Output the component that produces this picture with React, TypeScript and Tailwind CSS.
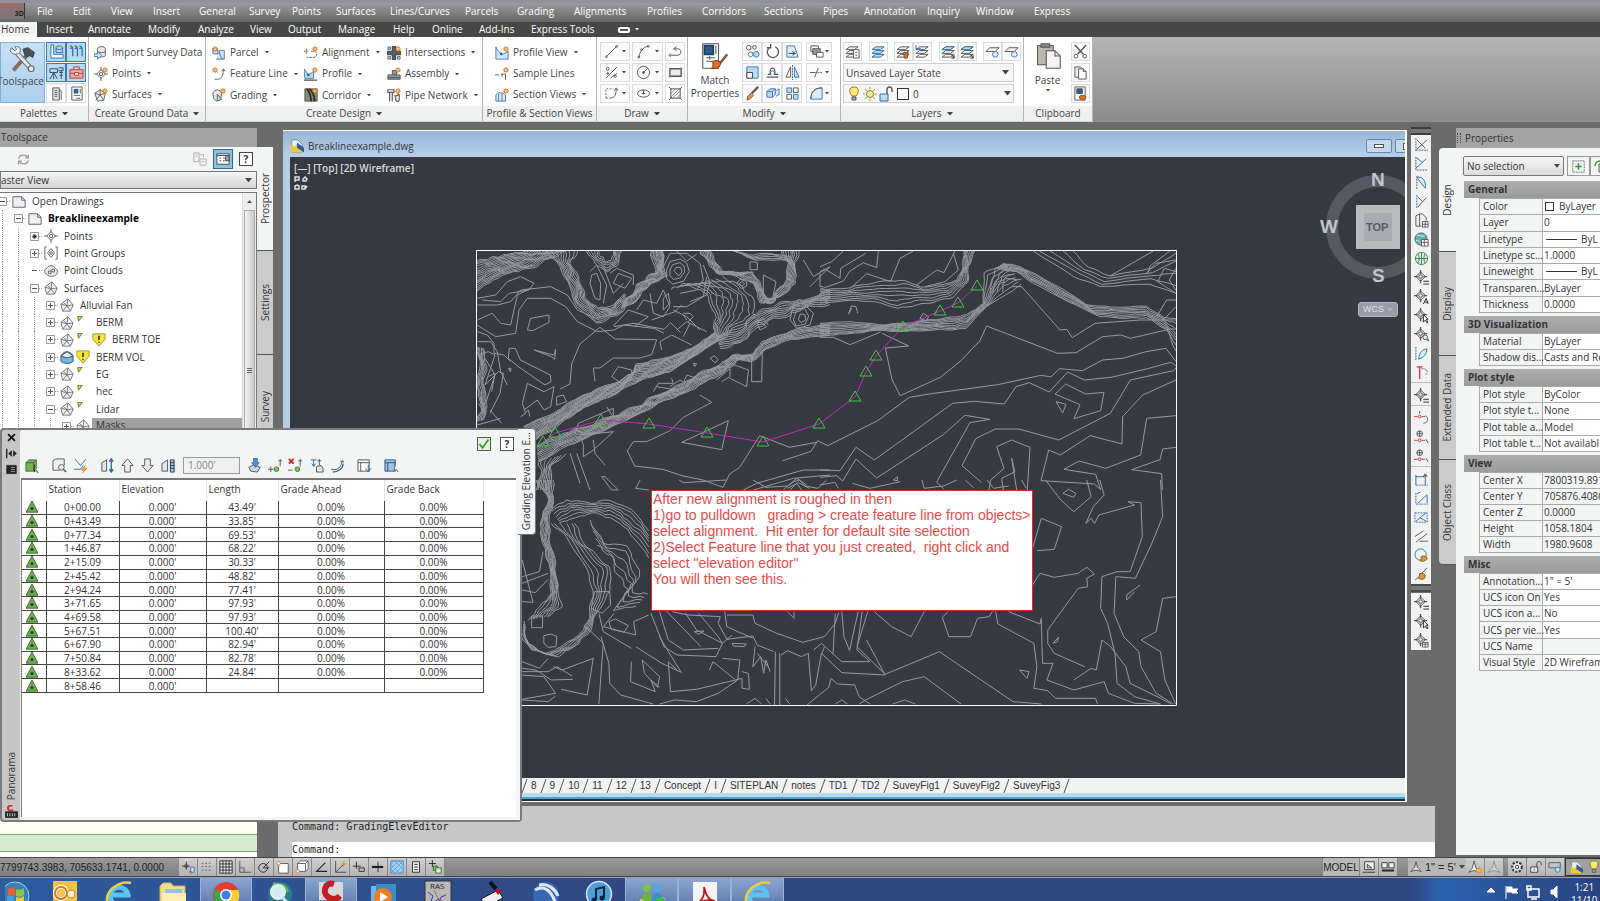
import React from 'react';

type Pt = [number, number];

/* ---------- icons, all on a 16x16 grid ---------- */

const star = (
  <g stroke="#e07b1f">
    <path d="M12.5 0v7M9 3.5h7M10 1l5 5M15 1l-5 5" strokeWidth="1.1" />
    <circle cx="12.5" cy="3.5" r="1.5" fill="#fff" strokeWidth="1" />
  </g>
);

const diamond = (
  <g>
    <path d="M8 3l5 5-5 5-5-5z" />
    <circle cx="8" cy="8" r="2" />
    <path d="M8 0v4M8 12v4M0 8h4M12 8h4" />
  </g>
);

const layers = (
  <g>
    <path d="M5 3h9l-4 3H1zM5 7h9l-4 3H1zM5 11h9l-4 3H1z" fill="#f4f4f4" />
  </g>
);

const smallDiamond = (
  <g>
    <path d="M7 2l5 5-5 5-5-5z" fill="#e4e7ea" />
    <circle cx="7" cy="7" r="2" />
    <path d="M7 0v4M7 10v4M0 7h4M10 7h4" strokeWidth="1.400" />
  </g>
);

const icons: Record<string, React.ReactNode> = {
  tools: (
    <g>
      <path d="M2 15L11 5" stroke="#8b6f5c" strokeWidth="2.4" />
      <path d="M8 2l3-1 4 3-1 3-2-1-2 1-1-2z" fill="#4c4f53" stroke="#3b3e42" strokeWidth=".6" />
      <path d="M3 3l10 11" stroke="#6d7175" strokeWidth="3" />
      <path d="M3 3l10 11" stroke="#e9edf0" strokeWidth="1.8" />
      <path d="M1 1l2 2 1-1-1-2c3 0 4 2 3 4-2 2-5 1-6-1z" fill="#e9edf0" stroke="#6d7175" strokeWidth=".6" />
      <circle cx="13" cy="14" r="1.8" fill="#e9edf0" stroke="#6d7175" strokeWidth=".8" />
    </g>
  ),
  prospector: <g stroke="#2d6ca8"><path d="M2 1v14h13v-4H5V1z" fill="#fff" /><ellipse cx="11" cy="4" rx="3.5" ry="2" fill="#b8dcf5" /><path d="M7.500 4v5h7V4" /></g>,
  pipes: <g stroke="#2d6ca8"><path d="M1 2c3 0 3 2 3 4v7M1 5c1-1 3-1 3 1M6 2c3 0 3 2 3 4v7M6 5c1-1 3-1 3 1M11 2c3 0 3 2 3 4v7M11 5c1-1 3-1 3 1" strokeWidth="1.300" /></g>,
  survey: <g stroke="#36485c"><path d="M1 4h8v4H1zM10 3h5v3h-5M5 8l-4 7M5 8v7M5 8l4 7M11 8h4M11 11h4M13 6v9" /></g>,
  toolbox: <g stroke="#b23a3a"><path d="M1 5h14v9H1z" fill="#f0a9a2" /><path d="M5 5V2h6v3M1 9h14" /><path d="M6 8h4v3H6z" fill="#fff" /></g>,
  server: <g><path d="M4 2h7v13H4z" fill="#e4e4e4" /><path d="M6 5h3M6 7h3M6 9h3M6 11h3M11 4l2 1v10" /></g>,
  propsPanel: <g><path d="M3 1h11v14H3z" fill="#fff" /><path d="M5 3h5v5H5z" fill="#3a5e8f" stroke="none" /><path d="M12 3v5M5 10h7M8 13h4" /></g>,
  importSurvey: <g><path d="M4 3c0-3 9-3 9 0v8c0 2-9 2-9 0z" fill="#e8eaec" /><path d="M4 6c0 2 9 2 9 0" /><path d="M0 9h4V6l5 5-5 4v-3H0z" fill="#cfe3f3" stroke="#3b6fa5" /></g>,
  points: <g>{diamond}{star}</g>,
  surfaces: <g><path d="M1 6l6-4 6 4-2 8-7 1z" fill="#eceef0" /><path d="M7 2v6l4 6M7 8l-5 6M7 8l6-2M1 6l6 2" />{star}</g>,
  parcel: <g><path d="M1 3h5l1 6h-6zM8 5h6v10H5" fill="#cfe4f7" stroke="#3b6fa5" /><path d="M8 5c0 4 2 7 4 10" /><g transform="translate(-9 0)">{star}</g></g>,
  featureLine: <g><path d="M3 14h3c4 0 7-3 7-11M11 5l2-3 2 3" /><g transform="translate(-9 0)">{star}</g></g>,
  grading: <g><path d="M1 6c2-5 9-5 10 0l-1 6-5 3-3-3z" fill="#e6e8ea" /><path d="M6 7l5 6-5 2z" fill="#b9d7ef" />{star}</g>,
  alignment: <g><path d="M0 6h5M8 6h4c3 0 3 7 0 7H3M3 3v6" strokeDasharray="3 1" />{star}</g>,
  profile: <g><path d="M0 15h15" strokeWidth="1.5" /><path d="M0 2l5 7 6-4v8H1z" fill="#b9d9f3" stroke="#3b78b5" /><circle cx="5" cy="9" r="1" fill="#333" />{star}</g>,
  corridor: <g><path d="M1 1h14v14H1z" fill="#8c8a78" stroke="#4b4a40" /><path d="M3 1c4 4 5 8 5 14M6 1c5 4 6 8 6 14" stroke="#2c2c26" strokeWidth="2" />{star}</g>,
  intersections: <g><path d="M6 0h4v6h6v4h-6v6H6v-6H0V6h6z" fill="#595f66" stroke="#34383c" /><path d="M1 1h3v3H1zM12 12h3v3h-3zM1 12h3v3H1z" fill="#a9c7e4" stroke="#4a6e93" />{star}</g>,
  assembly: <g><path d="M1 9h5V4h5v5h4v5H1z" fill="#8e969e" stroke="#4a5158" /><path d="M1 12h14M6 9h5" />{star}</g>,
  pipe: <g><path d="M1 2h7v3H1zM3 5v10M6 5v10M8 9c5 0 5 0 5-3M10 9v4c0 3 4 3 4 0V7" strokeWidth="1.3" />{star}</g>,
  profileView: <g stroke="#3b78b5"><path d="M1 1v14h14V6L8 10 3 5z" fill="#cfe4f7" /><circle cx="7" cy="9" r="1.200" fill="#23374a" />{star}</g>,
  sampleLines: <g><path d="M0 9h5M7 9c4 0 5-3 5 0v6M8 7v4" />{star}</g>,
  sectionViews: <g stroke="#3b78b5"><path d="M1 15V8c3-5 5-1 7-3l4 3v7z" fill="#dcebf8" /><path d="M4 7v8M8 6v9M12 8v7" />{star}</g>,
  line: <g><path d="M3 13L13 3" /><circle cx="2.500" cy="13.500" r="1" /><circle cx="13.500" cy="2.500" r="1" /></g>,
  arc: <g><path d="M3 14C4 8 7 4 13 2" /><circle cx="3" cy="14" r="1" /><circle cx="6" cy="6" r="1" /><circle cx="13" cy="2.500" r="1" /></g>,
  polyline: <g><path d="M2 12h8c5 0 5-7 0-7H7M9 3L6 5l3 2M3 10l-2 2 2 2" /></g>,
  divide: <g><path d="M2 14L14 2M7 14l7-5" /><circle cx="4" cy="4" r="1.500" /><circle cx="4" cy="9" r=".8" fill="#555" /><circle cx="12" cy="12" r="1.200" /></g>,
  circle: <g><circle cx="8" cy="8" r="6.500" /><circle cx="8" cy="8" r="1" fill="#555" /><path d="M8 8l4-4" /></g>,
  rect: <g><path d="M2 4h12v8H2z" fill="#ececec" strokeWidth="1.400" /><circle cx="14" cy="4" r="1" fill="#fff" /><circle cx="2" cy="12" r="1" fill="#fff" /></g>,
  curve: <g><path d="M7 13c5-1 6-4 6-10M11 5l2-3 2 3" /><path d="M2 13V3h8M2 13h5" strokeDasharray="2 1.500" stroke="#3b78b5" /></g>,
  ellipse: <g><ellipse cx="8" cy="8" rx="6.500" ry="3.800" /><path d="M8 4v5M6 8h4" /></g>,
  hatch: <g><path d="M3 3h10v10H3zM1 1l3 3M15 1l-3 3M1 15l3-3M15 15l-3-3" /><path d="M3 8l5-5M3 12l9-9M5 13l8-8M9 13l4-4" strokeWidth=".7" /></g>,
  copyObj: <g><circle cx="4" cy="4" r="2.500" /><circle cx="10" cy="3.500" r="2" /><circle cx="6" cy="11" r="2.500" stroke="#3b78b5" /><circle cx="12" cy="11" r="3" fill="#b9d9f3" stroke="#3b78b5" /></g>,
  rotate: <g><path d="M11 3a6 6 0 1 1-5 0M6 0v4H2" strokeWidth="1.400" /></g>,
  stretch: <g stroke="#3b78b5"><path d="M2 2h8l4 12H2z" fill="#dcedfa" /><path d="M4 10h6M8 8l3 2-3 2" stroke="#333" /></g>,
  scale: <g stroke="#3b78b5"><path d="M2 2h12v12H2z" fill="#b9dcf5" /><path d="M2 8h6v6H2z" fill="#fff" stroke="#444" /></g>,
  offset: <g><path d="M2 13h12M3 10h3c-3-9 7-9 4 0h4" strokeWidth="1.300" /><path d="M6 10c-1-5 5-5 4 0" stroke="#3b78b5" /></g>,
  mirror: <g><path d="M6 2v11H1z" /><path d="M10 2v11h5z" fill="#b9d9f3" stroke="#3b78b5" /><path d="M8 0v16" strokeDasharray="2 1" /></g>,
  erase: <g><path d="M14 1L7 8" stroke="#6b5444" strokeWidth="2.500" /><path d="M7 7l2 3-4 4-3 1 1-4z" fill="#d79a5b" stroke="#8a5526" /></g>,
  explode: <g stroke="#3b78b5"><path d="M2 6h6v6H2zM2 6l3-3h6L8 6M11 3v6l-3 3" fill="#b9d9f3" /><path d="M12 5l3-2v6l-3 2" fill="#dcedfa" /></g>,
  array: <g stroke="#3b78b5"><path d="M2 2h5v5H2zM9 9h5v5H9z" fill="#b9dcf5" /><path d="M9 2h5v5H9zM2 9h5v5H2z" stroke="#555" /></g>,
  front: <g><path d="M2 2h8v6H2z" /><path d="M4 5h8v6H4z" fill="#999" /><path d="M8 9h7v5H8z" fill="#fff" /></g>,
  trim: <g><path d="M1 8h6M10 3L6 13" /><path d="M9 8h6" strokeDasharray="2 1" stroke="#3b78b5" /></g>,
  fillet: <g><path d="M2 14C2 6 6 2 14 2v12z" fill="#dcedfa" stroke="#3b78b5" /><path d="M2 14C2 6 6 2 14 2" /></g>,
  layerProps: <g>{layers}<path d="M9 6h6v9H9z" fill="#fff" /><path d="M11 9h2M11 12h2" /></g>,
  layerBlue: <g stroke="#2f6cab"><path d="M5 3h9l-4 3H1zM5 7h9l-4 3H1zM5 11h9l-4 3H1z" fill="#bfdcf4" /></g>,
  layerBrush: <g>{layers}<path d="M8 9h5l-1 6H9z" fill="#c97a33" stroke="#85481a" /></g>,
  layerPrev: <g>{layers}<path d="M1 1v4h5" stroke="#2f6cab" /></g>,
  layerArrow: <g>{layers}<path d="M5 3h9l-4 3H1z" fill="#bfdcf4" stroke="#2f6cab" /><path d="M11 11l3 4M14 12v3h-3" stroke="#1d2c3c" /></g>,
  layerOne: <g><path d="M5 4h10l-4 4H1z" fill="#f4f4f4" /><circle cx="11" cy="11" r="3" stroke="#3b78b5" fill="#dcedfa" /></g>,
  bulb: <g><path d="M8 1c6 0 5 6 2 9H6C3 7 2 1 8 1z" fill="#fbe77a" stroke="#8d7a22" /><path d="M6 11h4v3H6z" fill="#aaa" /></g>,
  sun: <g><circle cx="8" cy="8" r="3.500" fill="#fbe9a0" stroke="#8d7a22" /><path d="M8 1v2M8 13v2M1 8h2M13 8h2M3 3l2 2M11 11l2 2M13 3l-2 2M3 13l2-2" stroke="#c78d1c" /></g>,
  unlock: <g stroke="#2f6cab"><path d="M2 8h8v7H2z" fill="#bcdcf5" /><path d="M9 8V4c0-4 5-4 5 0v2" stroke="#555" strokeWidth="1.400" /></g>,
  match: <g><path d="M1 1h9v14H1z" fill="#fff" strokeWidth=".6" /><path d="M2 2h5v5H2z" fill="#2f5a93" stroke="#1e3d66" /><path d="M8.500 2v5M3 9h5M3 11h4M5 8v2" strokeWidth=".6" /><path d="M15 7l-4 5" stroke="#7a6250" strokeWidth="1.600" /><path d="M7 11c2-1 5 0 4 2-1 3-4 2-5 2 2-1 0-2 1-4z" fill="#d8732b" stroke="#8f4413" strokeWidth=".6" /></g>,
  paste: <g strokeWidth=".6"><path d="M2 2h9v11H2z" fill="#bdb5ac" /><path d="M4 1h5v2H4z" fill="#888" /><path d="M7 5h5l3 3v7H7z" fill="#f2f3f5" /><path d="M12 5v3h3" /></g>,
  cut: <g><path d="M2 1l9 10M14 1L5 11" strokeWidth="1.500" /><circle cx="3" cy="13" r="2" /><circle cx="12.500" cy="13" r="2" /></g>,
  copy: <g><path d="M2 2h6l2 2v9H2z" fill="#eee" /><path d="M6 4h5l3 3v8H6z" fill="#fff" /><path d="M11 4v3h3" /></g>,
  pasteSpec: <g><path d="M2 1h11v14H2z" fill="#fff" /><path d="M4 3h6v5H4z" fill="#2f5a93" /><path d="M7 11c2-2 6-1 7 1-2 4-6 3-7 1z" fill="#d8732b" stroke="#8f4413" /></g>,
  refresh: <g stroke="#9a9a9a" strokeWidth="1.500"><path d="M2 7c1-5 8-6 11-2M14 2v4h-4M14 9c-1 5-8 6-11 2M2 14v-4h4" /></g>,
  docs: <g stroke="#aaa"><path d="M1 1h6v10H1zM3 3h2M3 5h2M8 8h7v7H8zM8 3h4v3M10 11h3" /></g>,
  preview: <g stroke="#2b3d4d"><path d="M1 2h14v12H1z" fill="#fff" /><path d="M1 4h14M4 7h2M4 10h2M8 7h2M8 10h2" /><path d="M11 4h4v6h-4z" fill="#9aa" /></g>,
  doc: <g stroke="#50566a"><path d="M1 2h10l4 4v8H1z" fill="#f1f1f3" /><path d="M11 2v4h4" /></g>,
  pointTree: diamond,
  pointGroups: <g><path d="M3 1H1v14h2M13 1h2v14h-2" /><path d="M8 3l4 5-4 5-4-5z" /><circle cx="8" cy="8" r="1.500" /></g>,
  cloud: <g><path d="M3 12C0 10 0 6 3 5c2-4 8-4 10 0 3 1 3 6 0 8-3 2-8 1-10-1z" fill="#f0f0f0" /><path d="M5 8h3v3H5zM9 6h3v3H9z" /></g>,
  surfTree: <g stroke="#6a6e78"><path d="M9 1l6 7-3 7H3L1 7z" fill="#f2f2f4" /><path d="M9 1L8 9l4 6M8 9l-5 6M8 9l7-1M8 9L1 7M4 5l4 4" /></g>,
  volume: <g stroke="#39464f"><path d="M1 7c0 0 2-5 7-5s7 5 7 5v6c-3 3-11 3-14 0z" fill="#74b7e2" /><path d="M1 7l7-5 7 5-7 2z" fill="#e7eef3" /></g>,
  warn: <g><path d="M1 1h14v6l-7 8-7-8z" fill="#f6e53c" stroke="#9a9026" /><path d="M8 3v5M8 10v1" stroke="#3c3800" strokeWidth="2" /></g>,
  flag: <path d="M2 1h12L4 14z" fill="#e4d13c" stroke="#5a5220" strokeWidth="2" />,
  addSel: <g><path d="M1 1h14v14H1z" strokeDasharray="2 1" /><path d="M8 4v8M4 8h8" stroke="#2f9c3a" strokeWidth="2" /></g>,
  toggleSel: <g><path d="M2 8c0-5 6-6 9-4" stroke="#2f9c3a" strokeWidth="1.500" /><path d="M6 6h9v8H6z" fill="#e5f1e5" /></g>,
  panoSel: <g><path d="M1 5l3-3h8v9l-3 3H1z" fill="#79b35d" stroke="#3f6c2e" /><path d="M1 5h8v9M9 5l3-3" stroke="#3f6c2e" /><path d="M10 7v8l2-2 2 3" stroke="#333" /></g>,
  zoomTo: <g><path d="M1 3l3-2h9v7M1 3v10h7" fill="#eee" /><circle cx="10" cy="10" r="3" fill="#dfeefa" /><path d="M12 12l3 3" strokeWidth="1.600" /></g>,
  quick: <g><path d="M2 1l6 7 6-7M1 12h7l3-4" stroke="#2f6cab" /><path d="M13 8l-4 5h3l-2 3 5-5h-3z" fill="#f4a53a" stroke="#c8751b" strokeWidth=".6" /></g>,
  elevBoth: <g><path d="M2 14V5l5-3v12z" fill="#e4e8ec" /><path d="M12 1v14M10 4l2-3 2 3M10 12l2 3 2-3" stroke="#2f6cab" strokeWidth="1.500" /></g>,
  up: <path d="M8 1l6 7h-3v7H5V8H2z" fill="#eee" />,
  down: <path d="M8 15l6-7h-3V1H5v7H2z" fill="#eee" />,
  elevList: <g><path d="M1 14V6l6-4v12z" fill="#e4e8ec" /><path d="M10 2h4v13h-4z" fill="#9ec8ea" stroke="#23374a" /><path d="M10 5h4M10 8h4M10 11h4" stroke="#23374a" /></g>,
  flatten: <g><path d="M2 10l5-3 7 3-3 5-7-1z" fill="#cdd4da" /><path d="M7 0v5H5l4 5 4-5h-2V0z" fill="#4f8fcb" stroke="#2a5d92" strokeWidth=".7" /></g>,
  insertPt: <g><path d="M0 12h6M3 9v6M13 1v8M11 3h4" /><circle cx="9" cy="12" r="2.500" fill="#7cc35f" stroke="#3f7c2e" /></g>,
  deletePt: <g><path d="M0 13h5M13 1v8M11 3h4" /><circle cx="10" cy="12" r="2.500" fill="#7cc35f" stroke="#3f7c2e" /><path d="M1 1l5 5M6 1L1 6" stroke="#cf2a22" strokeWidth="2" /></g>,
  adopt: <g><path d="M2 2h6M5 2v7M3 6l2 3 2-3" stroke="#2f6cab" /><path d="M11 1v7M9 3h4M8 15V9l5-1 2 3v4z" fill="#e6e6e6" /></g>,
  refSurf: <g><path d="M1 12c6 2 12-2 12-10M11 4h4" /><path d="M3 15c6 0 11-4 11-9" stroke="#2f6cab" strokeWidth="1.400" /></g>,
  tableDown: <g><path d="M1 2h12v12H1z" fill="#fff" /><path d="M1 5h12M4 5v9" /><path d="M12 7v7M9 11l3 4 3-4" stroke="#2f6cab" /></g>,
  tableSel: <g><path d="M1 2h11v12H1z" fill="#9ec8ea" stroke="#2a4f74" /><path d="M1 5h11M4 5v9" stroke="#2a4f74" /><path d="M11 6v8l2-2 2 3" fill="#fff" /></g>,
  check: <path d="M2 8l4 5 8-11" stroke="#3f9a33" strokeWidth="2.400" />,
  tri: <g><path d="M8 0l8 15H0z" fill="#6ab04c" stroke="#2c4f22" /><circle cx="8" cy="10" r="2" fill="#223a1b" stroke="none" /></g>,
  x: <path d="M3 3l10 10M13 3L3 13" stroke="#111" strokeWidth="2.500" />,
  autohide: <g fill="#222" stroke="#222"><path d="M1 1v14" strokeWidth="2" /><path d="M8 4v8L4 8zM11 4v8l4-4z" /></g>,
  menu: <g><path d="M1 2h14v12H1z" fill="#222" stroke="#222" /><path d="M7 5h6M7 8h6M7 11h6" stroke="#ccc" /></g>,
  civil: <g><path d="M9 1C4 0 3 3 4 5s4 3 6 1" stroke="#cc2d28" strokeWidth="2.400" /><path d="M0 8h16v8H0z" fill="#222" /><path d="M3 10v4M6 10v4M9 10v4M12 10v4" stroke="#eee" /></g>,
  dwg: <g><path d="M2 1h7l5 5v9H2z" fill="#e8edf2" stroke="#7b8794" /><path d="M1 6l4 3 3-3 6 6v3H1z" fill="#f1c92e" stroke="none" /><path d="M8 4l8 6v5l-8-5z" fill="#2c5ca3" stroke="none" /></g>,
  cogoA: <g><path d="M2 1v14M2 14h13" strokeDasharray="2 1" stroke="#2f6cab" /><path d="M3 13L14 3M3 3l9 9" /></g>,
  cogoB: <g><path d="M2 1v14h13" strokeDasharray="2 1" /><path d="M2 13L13 3M3 2l6 5" stroke="#2f6cab" /></g>,
  cogoC: <g><path d="M3 1v14" strokeDasharray="2 1" /><path d="M4 2c7 0 9 7 8 12L4 4z" fill="#dcedfa" stroke="#2f6cab" /></g>,
  cogoD: <g><path d="M3 1v14" strokeDasharray="2 1" stroke="#2f6cab" /><path d="M4 14L13 4M4 3l5 5" /></g>,
  sheet: <g><path d="M2 14V3l4-2h3l4 4v3M2 14h6M6 1v13" /><path d="M9 9h6v6H9zM9 12h6M12 9v6" fill="#fff" /></g>,
  globe: <g><circle cx="7.500" cy="7.500" r="6.500" fill="#5fb3a8" stroke="#2e6d86" /><path d="M3 4c3-2 5 2 8 0M2 9c3-1 4 3 7 4" stroke="#e2f4ee" /><path d="M8 8h7v7H8zM8 11h7M11 8v7" fill="#fff" /></g>,
  globeGrid: <g stroke="#3d7e52"><circle cx="8" cy="8" r="6.500" fill="#e3f1e8" /><path d="M8 1v14M1 8h14M4 3c2 3 2 7 0 10M12 3c-2 3-2 7 0 10" /></g>,
  ptEq: <g>{smallDiamond}<path d="M10 12h6M10 15h6" stroke="#222" /></g>,
  ptA: <g>{smallDiamond}<path d="M10 16l3-6 2 6M11 14h4" stroke="#222" /></g>,
  ptCur: <g>{smallDiamond}<path d="M10 7v8l2-2 2 3 1-1-2-3h2z" fill="#fff" stroke="#222" /></g>,
  ptZoom: <g>{smallDiamond}<circle cx="12" cy="11" r="2.500" fill="#dfeefa" /><path d="M14 13l2 2" strokeWidth="1.500" /></g>,
  ptSheet: <g>{smallDiamond}<path d="M9 10h6v5H9zM9 12h6M12 10v5" fill="#fff" /></g>,
  alignBlue: <g><path d="M2 1v14" strokeDasharray="2 1" /><path d="M5 14c1-8 4-10 9-11-1 6-3 9-9 11z" stroke="#2f6cab" fill="#dcedfa" /></g>,
  alignRed: <g><path d="M3 2h6M6 2v13" stroke="#c33" strokeWidth="1.400" /><path d="M8 4c6-1 8 4 4 7" strokeDasharray="2 1" stroke="#2f6cab" /></g>,
  curveRed: <g><path d="M0 6h4M8 6h4" stroke="#c33" /><circle cx="6" cy="6" r="1.500" stroke="#c33" /><path d="M6 0v3" /><path d="M12 5c4 2 3 8-2 8" stroke="#2f6cab" /></g>,
  curveRed2: <g><path d="M0 11h4M8 11h4" stroke="#c33" /><circle cx="6" cy="11" r="1.500" stroke="#c33" /><circle cx="6" cy="4" r="3" /><path d="M6 1v6M3 4h6M13 10l2 4" /></g>,
  dimA: <g stroke="#2f6cab"><path d="M2 14V3M12 3v11M2 5h10" /><path d="M2 14h13" strokeDasharray="2 1" /><path d="M10 5l2-3 2 3" stroke="#333" /></g>,
  dimB: <g><path d="M2 2v12h13" strokeDasharray="2 1" stroke="#2f6cab" /><path d="M4 13L14 4M3 3l4-2M14 4v9" stroke="#2f6cab" /></g>,
  dimC: <g stroke="#2f6cab"><path d="M1 3h13v10H1z" strokeDasharray="2 1" /><path d="M2 12L13 3M6 8l7 4" /></g>,
  dimD: <g><path d="M1 8l9-6M2 14L14 5M6 13h9" /></g>,
  paintGlobe: <g><circle cx="7" cy="7" r="6" stroke="#2f6cab" /><path d="M8 9c3-1 6 0 6 2s-4 4-7 3z" fill="#d79a3b" stroke="#8a5a16" /></g>,
  brush: <g><path d="M1 14l5-4M14 1l-6 6" /><path d="M6 7c3-1 6 0 6 3s-4 4-7 2z" fill="#d79a3b" stroke="#8a5a16" /></g>,
  snapGrid: <g fill="#444" stroke="none"><path d="M2 3h2v1H2zM6 3h2v1H6zM10 3h2v1h-2zM2 7h2v1H2zM6 7h2v1H6zM10 7h2v1h-2zM2 11h2v1H2zM6 11h2v1H6zM10 11h2v1h-2z" /></g>,
  grid: <path d="M1 1h14v14H1zM1 4.500h14M1 8h14M1 11.500h14M4.500 1v14M8 1v14M11.500 1v14" stroke="#222" fill="#eee" />,
  infer: <g><path d="M1 7h9M6 2v9" stroke="#222" /><circle cx="6" cy="7" r="2" /><path d="M11 8h4v6h-4z" stroke="#2f6cab" fill="#cfe4f7" /><circle cx="11" cy="14" r="1.500" stroke="#d66a30" /></g>,
  ortho: <path d="M2 1v13h13M2 9h5v5" stroke="#555" />,
  polar: <g stroke="#222"><circle cx="7" cy="9" r="5" /><path d="M7 9l7-7M7 9h7" /></g>,
  osnap: <g><path d="M3 4h11v11H3z" fill="#fff" /><circle cx="3" cy="4" r="2" stroke="#dd6a2c" fill="#fff" /></g>,
  osnap3d: <g><path d="M3 4l3-3h9v9l-3 3H3zM3 4h9v9M12 4l3-3" fill="#fff" /><circle cx="3" cy="13" r="2" stroke="#dd6a2c" fill="#fff" /></g>,
  otrack: <path d="M13 3L3 13h12" stroke="#222" strokeWidth="1.300" />,
  ducs: <g><path d="M3 1v13h12M3 14l9-9" stroke="#444" /><path d="M13 1l-3 4h3l-2 3 4-4h-3z" fill="#f6b53a" stroke="#c8751b" strokeWidth=".5" /></g>,
  dyn: <g stroke="#222"><path d="M1 7h9M5 2v8M8 9h6v4H8z" /></g>,
  lwt: <g stroke="#222"><path d="M8 2v12" /><path d="M1 8h13" strokeWidth="2.500" /></g>,
  transp: <g><path d="M1 1h14v14H1z" fill="#a7d3f2" stroke="#3b83bd" /><path d="M1 5l4-4M1 10l9-9M1 15L15 1M6 15l9-9M11 15l4-4M5 1l10 10M1 5l10 10M10 1l5 5M1 10l5 5" stroke="#5c9fd1" /></g>,
  qp: <path d="M4 2h8v12H4zM6 5h4M6 8h4M6 11h4" fill="#eee" stroke="#222" />,
  sc: <g><path d="M1 4h8M5 0v8" stroke="#222" /><path d="M6 7h5v5H6z" fill="#7cc35f" stroke="#2f6c23" /><path d="M9 9h6v6H9z" fill="#dff1da" stroke="#2f6c23" /></g>,
  modelTab: <g stroke="#333"><path d="M3 2h11v9H3z" fill="#eee" /><path d="M6 9l0-4 5 4zM1 14h14" /></g>,
  layoutTab: <g stroke="#333"><path d="M1 3h6v6H1zM9 3h6v6H9z" fill="#eee" /><path d="M1 12h14" strokeWidth="2.500" /></g>,
  annot: <path d="M8 1l2 8 5 5-7-2-7 2 5-5z" fill="#eee" stroke="#333" />,
  annotSun: <g><path d="M7 1l2 8 4 5-6-2-6 2 4-5z" fill="#eee" /><circle cx="12.500" cy="12" r="3" fill="#f4b63c" stroke="#b87c18" strokeWidth=".6" /></g>,
  annotOff: <path d="M8 1l2 8 5 5-7-2-7 2 5-5z" fill="#d4d4d4" stroke="#8a8a8a" />,
  gear: <g stroke="#333"><circle cx="8" cy="8" r="5.500" fill="#eee" strokeWidth="2.400" strokeDasharray="2.500 1.500" /><circle cx="8" cy="8" r="2" /></g>,
  lockOpen: <g stroke="#333"><path d="M2 8h8v6H2z" fill="#eee" /><path d="M9 8V4c0-3 5-3 5 0v2M6 10v2" /></g>,
  hw: <g stroke="#555"><path d="M1 3h13v6H1z" fill="#bbc3ca" /><circle cx="11" cy="11" r="3" fill="#b9d9f3" stroke="#2f6cab" /></g>,
};

function Icon({ name, className = 'size-4' }: { name: string; className?: string }) {
  return (
    <svg viewBox="0 0 16 16" className={`${className} shrink-0`} fill="none" stroke="#555" strokeWidth="1" aria-hidden="true">
      {icons[name]}
    </svg>
  );
}

function Caret({ className = 'w-[5px]' }: { className?: string }) {
  return (
    <svg viewBox="0 0 8 5" className={`${className} shrink-0`} fill="#444" aria-hidden="true">
      <path d="M0 0h8L4 5z" />
    </svg>
  );
}

/* ---------- ribbon ---------- */

const menus: [string, string][] = [
  ['File', 'w-[36px]'], ['Edit', 'w-[38px]'], ['View', 'w-[42px]'], ['Insert', 'w-[46px]'], ['General', 'w-[50px]'],
  ['Survey', 'w-[43px]'], ['Points', 'w-[44px]'], ['Surfaces', 'w-[54px]'], ['Lines/Curves', 'w-[75px]'], ['Parcels', 'w-[52px]'],
  ['Grading', 'w-[57px]'], ['Alignments', 'w-[73px]'], ['Profiles', 'w-[55px]'], ['Corridors', 'w-[62px]'], ['Sections', 'w-[59px]'],
  ['Pipes', 'w-[41px]'], ['Annotation', 'w-[63px]'], ['Inquiry', 'w-[49px]'], ['Window', 'w-[58px]'], ['Express', 'w-[40px]'],
];

const tabs: [string, string][] = [
  ['Insert', 'w-[42px]'], ['Annotate', 'w-[60px]'], ['Modify', 'w-[50px]'], ['Analyze', 'w-[52px]'], ['View', 'w-[38px]'],
  ['Output', 'w-[50px]'], ['Manage', 'w-[55px]'], ['Help', 'w-[39px]'], ['Online', 'w-[47px]'], ['Add-Ins', 'w-[52px]'],
  ['Express Tools', 'w-[87px]'],
];

function Panel({ title, width, caret = true, children }: { title: string; width: string; caret?: boolean; children: React.ReactNode }) {
  return (
    <section className={`${width} flex shrink-0 flex-col border-r border-[#b4b4b4]`}>
      <div className="flex flex-1 pt-[5px]">{children}</div>
      <h2 className="flex h-[15px] items-center justify-center gap-[5px] whitespace-nowrap bg-[#eff0f0] text-[#444]">
        {title}
        {caret && <Caret className="w-[6px]" />}
      </h2>
    </section>
  );
}

function Cmd({ icon, label, caret = true }: { icon: string; label: string; caret?: boolean }) {
  return (
    <button type="button" className="flex h-[21px] items-center whitespace-nowrap">
      <Icon name={icon} className="size-[14px]" />
      <span className="mr-[6px] ml-1">{label}</span>
      {caret && <Caret className="w-[4px]" />}
    </button>
  );
}

function Tool({ icon, caret = false, label }: { icon: string; caret?: boolean; label: string }) {
  return (
    <button type="button" aria-label={label} className="flex h-[19px] items-center justify-around border border-[#dcdcdc] bg-[#fbfbfb] px-px">
      <Icon name={icon} className="size-[15px]" />
      {caret && <Caret className="w-[4px]" />}
    </button>
  );
}

function Ribbon() {
  const palettes = ['prospector', 'pipes', 'survey', 'toolbox', 'server', 'propsPanel'];
  return (
    <div className="flex h-[85px] bg-gradient-to-b from-[#b4b4b4] to-[#8c8c8c] text-[#444]">
      <div className="flex border-b border-[#d5d5d5] bg-white">
        <Panel title="Palettes" width="w-[89px]">
          <button type="button" className="flex h-[61px] w-[45px] flex-col items-center border border-[#7fb0d8] bg-gradient-to-b from-[#c7e0f5] to-[#acd0ee]">
            <Icon name="tools" className="mt-[3px] size-[26px]" />
            <span className="mt-[2px] -ml-[4px]">Toolspace</span>
          </button>
          <div className="ml-px grid h-[61px] grid-cols-2 gap-y-px">
            {palettes.map((p, i) => (
              <button
                key={p}
                type="button"
                aria-label={p}
                className={`flex w-[20px] items-center justify-center border ${i < 4 ? 'border-[#3f78b5] bg-[#b9d9f3]' : 'border-[#dcdcdc]'}`}
              >
                <Icon name={p} className="size-[15px]" />
              </button>
            ))}
          </div>
        </Panel>
        <Panel title="Create Ground Data" width="w-[117px]">
          <div className="pl-[5px]">
            <Cmd icon="importSurvey" label="Import Survey Data" caret={false} />
            <Cmd icon="points" label="Points" />
            <Cmd icon="surfaces" label="Surfaces" />
          </div>
        </Panel>
        <Panel title="Create Design" width="w-[277px]">
          <div className="grid grid-cols-[92px_83px_1fr] pl-[6px]">
            <Cmd icon="parcel" label="Parcel" />
            <Cmd icon="alignment" label="Alignment" />
            <Cmd icon="intersections" label="Intersections" />
            <Cmd icon="featureLine" label="Feature Line" />
            <Cmd icon="profile" label="Profile" />
            <Cmd icon="assembly" label="Assembly" />
            <Cmd icon="grading" label="Grading" />
            <Cmd icon="corridor" label="Corridor" />
            <Cmd icon="pipe" label="Pipe Network" />
          </div>
        </Panel>
        <Panel title="Profile & Section Views" width="w-[114px]" caret={false}>
          <div className="pl-[12px]">
            <Cmd icon="profileView" label="Profile View" />
            <Cmd icon="sampleLines" label="Sample Lines" caret={false} />
            <Cmd icon="sectionViews" label="Section Views" />
          </div>
        </Panel>
        <Panel title="Draw" width="w-[91px]">
          <div className="grid flex-1 grid-cols-[30px_31px_20px] content-start gap-x-[2px] gap-y-[2px] pl-[3px]">
            <Tool icon="line" label="Line" caret />
            <Tool icon="arc" label="Arc" caret />
            <Tool icon="polyline" label="Polyline" />
            <Tool icon="divide" label="Points" caret />
            <Tool icon="circle" label="Circle" caret />
            <Tool icon="rect" label="Rectangle" />
            <Tool icon="curve" label="Curve" caret />
            <Tool icon="ellipse" label="Ellipse" caret />
            <Tool icon="hatch" label="Hatch" />
          </div>
        </Panel>
        <Panel title="Modify" width="w-[153px]">
          <button type="button" className="flex w-[54px] flex-col items-center leading-[13px]">
            <Icon name="match" className="mb-[4px] size-[28px]" />
            Match<br />Properties
          </button>
          <div className="grid grid-cols-[20px_20px_20px_30px] content-start gap-y-[2px]">
            <Tool icon="copyObj" label="Copy object" />
            <Tool icon="rotate" label="Rotate" />
            <Tool icon="stretch" label="Stretch" />
            <div className="ml-1 grid"><Tool icon="front" label="Draw order" caret /></div>
            <Tool icon="scale" label="Scale" />
            <Tool icon="offset" label="Offset" />
            <Tool icon="mirror" label="Mirror" />
            <div className="ml-1 grid"><Tool icon="trim" label="Trim" caret /></div>
            <Tool icon="erase" label="Erase" />
            <Tool icon="explode" label="Explode" />
            <Tool icon="array" label="Array" />
            <div className="ml-1 grid"><Tool icon="fillet" label="Fillet" caret /></div>
          </div>
        </Panel>
        <Panel title="Layers" width="w-[183px]">
          <div className="flex flex-1 flex-col gap-[2px] px-[2px]">
            <div className="flex justify-between">
              <Tool icon="layerProps" label="Layer properties" />
              <Tool icon="layerBlue" label="Make current" />
              <div className="flex"><Tool icon="layerBrush" label="Layer match" /><Tool icon="layerPrev" label="Previous" /></div>
              <div className="flex"><Tool icon="layerArrow" label="Freeze" /><Tool icon="layerArrow" label="Off" /></div>
              <div className="flex"><Tool icon="layerOne" label="Isolate" /><Tool icon="layerOne" label="Unisolate" /></div>
            </div>
            <div className="relative mr-[7px] flex h-[19px] items-center border border-[#d0d0d0] bg-[#f7f7f7]">
              <select aria-label="Layer state" className="w-full appearance-none bg-transparent pl-[2px] leading-4">
                <option>Unsaved Layer State</option>
              </select>
              <span className="pointer-events-none absolute right-1"><Caret className="w-[7px]" /></span>
            </div>
            <div className="relative mr-[7px] flex h-[19px] items-center border border-[#d0d0d0] bg-[#f7f7f7] pl-[2px]">
              <Icon name="bulb" /><Icon name="sun" /><Icon name="unlock" />
              <i className="ml-[3px] size-[12px] shrink-0 border border-[#333] bg-white" />
              <select aria-label="Layer" className="w-full appearance-none bg-transparent pl-1 leading-4">
                <option>0</option>
              </select>
              <span className="pointer-events-none absolute right-[2px]"><Caret className="w-[7px]" /></span>
            </div>
          </div>
        </Panel>
        <Panel title="Clipboard" width="w-[69px]" caret={false}>
          <button type="button" className="flex w-[47px] flex-col items-center leading-[13px]">
            <Icon name="paste" className="mb-[4px] size-[28px]" />
            Paste
            <Caret className="mt-[2px] w-[4px]" />
          </button>
          <div className="flex flex-col gap-[2px]">
            <Tool icon="cut" label="Cut" />
            <Tool icon="copy" label="Copy" />
            <Tool icon="pasteSpec" label="Paste special" />
          </div>
        </Panel>
      </div>
    </div>
  );
}

/* ---------- toolspace ---------- */

interface Node {
  depth: number;
  state: '-' | '+' | '.' | '';
  icon: string;
  label: string;
  marks?: string[];
  bold?: boolean;
  selected?: boolean;
}

const tree: Node[] = [
  { depth: 0, state: '-', icon: 'doc', label: 'Open Drawings' },
  { depth: 1, state: '-', icon: 'doc', label: 'Breaklineexample', bold: true },
  { depth: 2, state: '.', icon: 'pointTree', label: 'Points' },
  { depth: 2, state: '+', icon: 'pointGroups', label: 'Point Groups' },
  { depth: 2, state: '', icon: 'cloud', label: 'Point Clouds' },
  { depth: 2, state: '-', icon: 'surfTree', label: 'Surfaces' },
  { depth: 3, state: '+', icon: 'surfTree', label: 'Alluvial Fan' },
  { depth: 3, state: '+', icon: 'surfTree', label: 'BERM', marks: ['flag'] },
  { depth: 3, state: '+', icon: 'surfTree', label: 'BERM TOE', marks: ['flag', 'warn'] },
  { depth: 3, state: '+', icon: 'volume', label: 'BERM VOL', marks: ['warn'] },
  { depth: 3, state: '+', icon: 'surfTree', label: 'EG', marks: ['flag'] },
  { depth: 3, state: '+', icon: 'surfTree', label: 'hec', marks: ['flag'] },
  { depth: 3, state: '-', icon: 'surfTree', label: 'Lidar', marks: ['flag'] },
  { depth: 4, state: '+', icon: 'surfTree', label: 'Masks', selected: true },
];

function TreeRow({ node }: { node: Node }) {
  return (
    <li className="flex items-center">
      {Array.from({ length: node.depth }, (_, i) => (
        <i key={i} className="w-[16px] shrink-0 self-stretch border-l border-dotted border-[#999]" />
      ))}
      <svg viewBox="0 0 9 9" className="-ml-1 size-[9px] shrink-0" stroke="#999" fill="#fff" aria-hidden="true">
        {node.state !== '' && <path d="M.5.5h8v8h-8z" />}
        {node.state === '.' ? <circle cx="4.500" cy="4.500" r="2" fill="#222" /> : <path d="M2 4.500h5" stroke="#555" />}
        {node.state === '+' && <path d="M4.500 2v5" stroke="#555" />}
      </svg>
      <i className="mr-[2px] w-[3px] shrink-0 border-t border-dotted border-[#999]" />
      <Icon name={node.icon} className="size-[14px]" />
      {node.marks?.map((m) => (
        <span key={m} className={`flex w-[16px] ${m === 'flag' ? 'pl-[3px]' : 'justify-end'}`}>
          <Icon name={m} className={m === 'flag' ? 'mb-2 size-[6px]' : 'size-[14px]'} />
        </span>
      ))}
      <span
        className={`whitespace-nowrap ${node.selected ? 'ml-[2px] h-full flex-1 bg-[#a0a0a0] pl-[4px]' : 'ml-[6px]'} ${node.bold ? 'font-bold text-black' : ''}`}
      >
        {node.label}
      </span>
    </li>
  );
}

function SideTab({ label, active = false, className }: { label: string; active?: boolean; className: string }) {
  return (
    <button
      type="button"
      className={`flex items-center justify-center border-b border-[#555] ${active ? 'bg-[#f3f4f4]' : 'bg-[#cbcbcb]'} ${className}`}
    >
      <span className="rotate-180 whitespace-nowrap [writing-mode:vertical-rl]">{label}</span>
    </button>
  );
}

function Toolspace() {
  return (
    <aside className="flex w-[273px] shrink-0 flex-col pt-[6px] text-[#333]">
      <h2 className="mr-[16px] h-[19px] bg-[#a4a4a4] pl-px leading-[19px]">Toolspace</h2>
      <div className="flex min-h-0 flex-1">
        <div className="flex min-w-0 flex-1 flex-col bg-[#f3f4f4]">
          <div className="flex h-[24px] items-center gap-[6px] pr-[4px] pl-[17px]">
            <Icon name="refresh" className="mr-auto size-[13px]" />
            <Icon name="docs" className="size-[14px]" />
            <button type="button" aria-label="Preview" className="flex size-[20px] items-center justify-center border border-[#2f6c96] bg-[#8fc0e0]">
              <Icon name="preview" className="size-[14px]" />
            </button>
            <button type="button" className="size-[14px] border border-[#444] bg-white text-center leading-[12px] font-bold">?</button>
          </div>
          <div className="relative flex h-[18px] items-center border border-[#777] bg-gradient-to-b from-[#f5f5f5] to-[#d4d4d4]">
            <select aria-label="View" className="w-full appearance-none bg-transparent leading-[15px]">
              <option>aster View</option>
            </select>
            <span className="pointer-events-none absolute right-1"><Caret className="w-[7px]" /></span>
          </div>
          <div className="mt-[3px] flex flex-1 border-t border-r border-[#777] bg-white">
            <ul className="grid h-[242px] flex-1 grid-rows-14 pl-[2px]">
              {tree.map((n) => <TreeRow key={n.label} node={n} />)}
            </ul>
            <div className="flex w-[14px] flex-col items-center border-l border-[#ddd] bg-[#eee]">
              <span className="flex h-[17px] items-center"><Caret className="w-[5px] rotate-180" /></span>
              <div className="flex h-[320px] w-[11px] flex-col items-center justify-center gap-px border border-[#aaa] bg-gradient-to-r from-[#f4f4f4] to-[#c9c9c9]">
                <i className="h-px w-[5px] bg-[#666]" />
                <i className="h-px w-[5px] bg-[#666]" />
                <i className="h-px w-[5px] bg-[#666]" />
              </div>
            </div>
          </div>
          <div className="h-[35px] bg-[#fffef0]">
            <div className="mt-[12px] h-[18px] border-t border-b border-[#74a87c] bg-[#d5eccf]" />
            <div className="h-[5px] bg-white" />
          </div>
        </div>
        <div className="w-[16px]">
          <SideTab label="Prospector" active className="h-[104px] w-full" />
          <SideTab label="Settings" className="h-[104px] w-full" />
          <SideTab label="Survey" className="h-[104px] w-full" />
        </div>
      </div>
    </aside>
  );
}

/* ---------- drawing ---------- */

const pts = (s: string): Pt[] => s.split(' ').map((p) => p.split(',').map(Number) as Pt);

// Fills the space between two edge lines with contours, bunched unevenly like real ground.
function band(from: string, to: string, count: number, rough = 5): string {
  const a = pts(from);
  const b = pts(to);
  let d = '';
  for (let i = 0; i < count; i++) {
    const at = (k: number): Pt => {
      const t = (i + Math.sin(i * 5 + k * 3) * 0.35) / (count - 1);
      return [a[k][0] + (b[k][0] - a[k][0]) * t, a[k][1] + (b[k][1] - a[k][1]) * t];
    };
    const line: string[] = [];
    a.forEach((_, k) => {
      const [x, y] = at(k);
      line.push(`${Math.round(x)} ${Math.round(y)}`);
      if (k < a.length - 1) {
        const [nx, ny] = at(k + 1);
        [0.25, 0.5, 0.75].forEach((u) => {
          const w = Math.sin((k + u) * 19.7 + i * 0.4) * rough;
          const v = Math.cos((k + u) * 31 + i * 0.5) * rough * 0.8;
          line.push(`${Math.round(x + (nx - x) * u + w)} ${Math.round(y + (ny - y) * u + v)}`);
        });
      }
    });
    d += `M${line.join('L')}`;
  }
  return d;
}

const west: string[] = [
  band('20,155 70,120 130,95 185,85 240,55 290,33', '20,62 60,55 90,48 120,42 150,38 170,33', 17, 3),
  band('160,560 250,520 340,465 430,430 490,400 500,370 560,360 640,335 690,310 735,275', '200,600 260,560 320,518 370,490 420,472 480,435 530,415 600,395 670,350 750,300', 17, 3),
  band('200,620 280,580 350,560 420,530 500,500 545,470 640,430 690,395 750,375 785,345 850,342', '205,668 295,615 385,580 450,548 530,512 580,482 650,458 700,428 765,395 800,362 850,362', 12, 4),
  band('850,342 875,305 930,285 1000,262 1080,255', '850,362 890,328 950,300 1010,294 1080,284', 9, 2),
  band('735,275 735,220 710,160 690,150 640,130 600,150', '750,300 800,260 850,230 850,170 800,130 760,110', 10, 5),
  band('740,290 820,260 850,225 890,205 950,185 1000,180 1080,150', '750,325 810,310 850,270 900,240 960,225 1000,205 1080,192', 9, 4),
  band('225,33 270,80 300,140 320,200 380,248 440,228 475,190', '320,33 300,70 325,110 345,170 385,205 430,195 465,160', 10, 4),
  band('455,205 495,150 515,125 555,100 545,33', '490,190 520,150 545,130 590,108 578,33', 12, 6),
  band('350,33 375,70 410,95 440,80 455,33', '385,33 392,50 410,65 425,60 430,33', 6, 3),
  band('690,33 715,70 740,100 800,110 850,130 870,190', '720,33 740,70 760,95 850,95 870,130 900,190', 9, 4),
  band('935,33 955,70 950,120 910,170 880,190', '985,33 975,80 975,130 930,170 900,190', 9, 4),
  band('790,33 840,45 900,40 960,50', '800,36 860,62 930,58 975,75', 5, 2),
  band('22,320 30,380 22,440 35,500 22,545', '40,325 50,380 40,430 50,500 40,540', 6, 3),
  band('205,668 215,700 200,750', '290,640 240,680 245,750', 8, 3),
  'M590 90l10-25 30-8 20 12 8 25-18 30-32 8-18-15zM600 90l8-16 22-6 12 10 2 18-14 18-20 4-10-12zM612 92l6-10 14 0 4 14-10 12z',
  'M580 80l20-40 50 0 40 30 10 50-20 30-50 10M700 75l20 50-10 40-50 20M710 110l-10 60-50 30-40 0',
  'M960 240l10-45 30-5 30 30-10 35-40 10zM970 238l12-32 22 0 12 22-10 24-28 6zM985 238l6-16 14 2 2 16-14 8z',
  'M800 130l10-12 20 6 0 14-16 8zM808 130l8-5 8 6-8 8z',
  'M22 175l55-10 35-40 40-15 40 20-15 20-60 10-25 25-55-5M22 195l60 0 40-10 30-35 90-10 50 25 30 45 55 25 80-20',
  'M22 255l55 35 60-10 10-70 25-35 70 0 45 25 35 45 60 30 50-5 30-15 90 10 30 15',
  'M22 240l45-20 25 30 30 5 20-90 40-20M22 275l30 10 20 25 0 30 30 5 20 20 M22 305l40 0 20 30 10 60 20 40',
  'M172 270l10-35 55-10 0 22-48 25zM192 330l60 15 5-17-3 30-10-8zM118 325l18 0 15 35 90 45 2 20-18 10-80-55-30-25z',
  'M390 262l-60 50-25 60-5 60-30 15M390 262l45 35 125 2-15 45-35 10-80 0-40 30-20 0 5 40M425 410l20-30 40 10 0 30-30 10z',
  'M430 258l45-48 60 20 -40 28M432 260l60-10 90 18 20-20 30 30M500 210l20-30 40 10 20-40 20 50-20 30-30-10-10-60',
  'M360 130l5-25 15-5 12 30-2 50-15-5zM360 95l20-20 30 60-10 55M400 80l30 80 30-30 M430 130l15-30 40 15-20 30zM420 100l20-15 50 20 0 30',
  'M545 240l70-25 20-20M575 330l-5-25 35-20 60 30M580 210l0-35 15-15 5 30zM620 270l30-25 60 30 M610 210l40 20 40 40M640 290l20-40',
  'M840 65l22 2 0 22-22 0zM880 105l38 20-10 50-28 0zM1080 80l-60 60M1050 100l0 40 10 0M1000 60l30 50 50-30',
  'M25 345l30-10 20 10-10 30-20 60 40-40 15 5-10 60-30 60M45 355l30 50-20 60-8 25M55 410l20-10-10 55M60 510l35 40M22 555l70-20M25 490l20 30',
  'M172 430l50 25 30-15-10 60-20 10-20-30-40 30M172 430l-15 60 10 30-15 10M260 470l20-5 10 20-30 10zM165 520l10-10 5 20',
  'M115 385l8 0-2 10zM720 355l14-8 10 12-8 10zM780 370l55 20-5 50-50-25M845 350l0 75 30 0 2-90M670 370l10 2-6 8z',
  'M690 465l35 22-85 45-40 40-70 33-40 0-18 28 22 45 85 10 60 20 60 12 60 22 20-40 30-20 60-95 90 35 80-15',
  'M775 542l-140 65 120 22zM340 650l30-20 60-55-100 10 10 30zM370 600l5 40 30 35M300 640l30 90M320 640l40 110M395 710l10 0 40 40-20 0z',
  'M820 750l40-20 140-40 80 0M850 750l120-35 110-10M940 750l40-35 30 20M960 750l20-20 15 20M550 455l15-25 45 0-5-15M600 440l30-20 15 10',
  'M315 580l10-30 105-45 0 25-60 30M410 500l25 40M560 440l60 10 20-10M640 430l10-25 60 20M740 420l40-35 0 25-25 15',
  'M620 33l30 30 30-20M640 220l20 0 10 10-15 15M650 240l-10-15M860 240l30 20-20 10-10-25 20-10 15 20',
];

const east: string[] = [
  band('0,150 80,145 130,135 210,120 260,125 300,140 370,135 410,120 430,80 430,33', '0,190 90,180 165,185 235,205 290,195 350,185 400,170 445,125 445,80 465,33', 8, 2),
  band('0,250 90,245 180,255 250,250 330,240 400,230 440,225 490,190 495,100 550,70', '0,285 80,283 170,270 250,275 350,268 410,270 440,262 500,200 575,150 605,135', 9, 2),
  band('550,70 600,80 660,110 750,160 800,195 870,200 980,200 1030,230 1068,240', '530,85 590,95 640,130 745,185 840,230 920,235 980,232 1040,270 1068,330', 8, 2),
  band('640,33 760,110 840,138 990,135 1068,155', '750,33 810,80 870,110 1000,80 1068,45', 5, 2),
  band('510,160 525,85 560,78', '545,155 555,120 600,115', 4, 2),
  'M0 80l35-15 35-32M0 95l15-8 45 28 2-30 75-45M175 33l-5 50-40-15-40 25-20 30-70 25M280 33l-40 22-28 70-72-24-50 45',
  'M290 135l60-45 22 8 33-65M400 40l15 50-40 35-60 15M95 205l-10 18M108 200l5 20M86 222l8-24 14 2M300 235l10-15 15 10-5 14z',
  'M0 292h40l50 22 92-38M186 280l80 38-70 6 20 95 25 48 120-55 62-50 45-48 10-8 22-48 212 82 56-2 80-48 55-5 28 10 120-28 20 0',
  'M575 140h30l115 130 20-2 17 25 68-43 135-10 108 0M1010 230l30-50 28 0M1030 240l38-40M1068 365l-30-40-60 10-70 20-60 5-60 32-70-6-25 25-30-5-130 28-205 28-60 10-95 70-150 75-30-15-20 32-85 28',
  'M0 690l60 2 48-70 55 38 235-170 65-6 90 8 35-52 40-12 60 28 55-60 50 24 80-8 110-26 65-18 8 0 15 12-10 12-130 28-60 100-155 80-120-33-70 0-58 28-42 82 58 50',
  'M0 712l50-5 18 16 40-66 62 57 200-130 65-58 75 12-60 10-100 178 22 22M0 735l45-8 10 18M220 720l12-10 0 12z',
  'M705 462l32-30 60 30 55-5-10 55-80 24 18-42zM708 485l30 8-10 26z',
  'M530 620l45-20 55 22-8 128M530 620l22 65-40 35-5 30M575 655l15 95M575 655l10 40-40 20 5 35',
  'M1068 420l-100 45-60 65-2 82-95-25-90 58-35-15-23 92 160 10 20 18M732 688l45-25 80 22 105-40 18-110 88-8M732 688l95 15 15 47M1068 622l-40 5-8 32-85 30 90 12 2 49',
  'M1000 33l-130 75M1068 60l-60 10-30 30M1068 85l-20 35 20 32M1068 95l-35-10-20 40 55 35M1050 33l-60 45-5 20',
];

const south: string[] = [
  band('60,0 90,60 70,130 75,190 90,250 95,340 70,380 40,420', '100,0 100,50 90,120 90,180 105,250 110,330 120,380 90,410', 8, 3),
  band('95,90 130,60 185,70 230,60 280,90 320,150', '115,130 150,110 190,100 230,110 270,150 320,230', 7, 4),
  band('185,120 215,190 270,200 300,270 280,340 320,340', '200,190 235,230 250,280 270,330 240,390 290,380', 5, 4),
  band('95,130 130,170 180,270 190,330 185,400 170,450 120,500 80,520 40,490 32,420', '150,130 175,200 230,260 230,330 200,400 180,460 150,500 110,530 50,510 28,470', 6, 3),
  'M28 365L53 367 28 240M28 290L68 275 76 215M28 310L88 280M28 330L58 338 88 298M195 335L230 335 232 375 212 400 187 385zM228 425L243 417 273 437 263 457 233 447zM50 408L75 408 75 443 50 443zM78 467L95 462 108 470 106 500 88 502 78 490z',
  'M28 545L68 565 88 535M28 575L88 575 108 560 143 588M28 585L78 590 105 640 28 658M28 565L60 570 95 600 145 598M28 660L88 665 105 648',
  'M100 560L120 570 192 535 178 645 118 628M175 440L215 490 205 672M210 470L228 550 230 610 255 645 330 672M205 400L215 455 280 505M240 400L215 440 290 465 285 425 320 405',
  'M280 545L278 605 335 635 325 600 345 622M305 540L345 590 340 622 310 580 305 540M290 500L350 550 395 577 365 515 345 470',
  'M325 400L340 450 355 500 385 525 475 530 490 490 430 450 405 400M345 395L365 480 400 510 480 505M360 392L440 500M425 455L447 453 435 463zM435 400L480 470 490 490 512 465M375 395L410 405 485 410 480 430 500 478 560 468 570 495 608 515',
  'M365 545L370 635 430 628 520 600 468 545 460 570M365 545L385 570M345 672L380 660 430 665 480 640 525 600 530 540 490 535M512 490L545 492 540 500 515 498zM535 575L550 580 552 628 535 625 535 595 520 600',
  'M565 500L560 560 578 530 585 580 590 540 600 575M570 520L595 560M500 405L560 405 565 430 615 460 675 487 725 470 750 430 758 398M495 395L500 440 560 475',
  'M612 515L610 675M622 520L622 675M625 525L640 512 672 530 688 520 695 632 705 615 718 520 765 578 865 585 822 480M700 510L718 490 765 545 830 545 800 510 812 395M718 525L725 500',
  'M750 400L745 520M765 395L770 470 783 512 795 440 803 395M825 395L800 500 865 583M685 675L735 622 740 595 755 612 795 615 805 650 830 672M545 672L565 655 580 672M590 655L600 672M635 655L645 672M750 672L765 660 778 672M882 672L910 660 935 672',
  'M640 395L655 415 655 395M840 395L880 440 925 470 955 395M1010 395L997 412 1012 470 1062 470 1078 415 1105 410 1112 395M865 583L990 515 1160 665 1225 672M805 672L820 660 905 605 955 590 1040 672',
  'M1120 395L1125 432 1208 490 1215 560 1208 625 1240 632 1258 655 1350 655 1355 672M1150 395L1222 432 1225 415 1228 550 1252 550 1238 600 1300 630 1370 605 1380 640 1440 670 1500 672',
  'M1240 450L1240 490 1255 520 1325 560M1240 450L1310 325 1332 320 1330 295 1348 282 1330 262 1310 280 1255 292 1222 280 1205 315M1252 490L1265 472 1262 485zM1175 570L1197 575 1192 595z',
  'M1365 290L1400 275 1430 275 1458 170 1455 68 1425 65 1440 75 1358 105 1348 130 1340 115 1328 130 1345 80 1370 45 1360 0M1365 290L1362 385 1378 430 1395 520 1400 610 1440 650 1500 672',
  'M1397 290L1442 295 1480 190 1505 110 1500 0M1397 290L1393 400 1415 470 1450 515 1455 560 1490 640 1530 672M1300 600L1340 565 1352 570 1365 480 1385 500 1420 560 1430 610 1500 655 1525 672',
  'M1535 350L1505 355 1490 455 1455 480 1500 515 1510 600 1535 672M1453 315L1422 345 1422 360 1440 335M1275 40L1288 28 1305 40 1300 52zM1205 205L1225 115 1272 140 1255 208 1215 212M1235 0L1270 60 1300 95 1340 50 1330 0',
  'M390 0L400 8 500 0M560 0L590 22 640 18 655 5 668 0 680 18 710 25 730 0M640 25L665 8 690 25M790 10L830 25 900 5M950 0L955 25 1000 18 1030 0M1050 0L1070 25M1100 0L1115 25 1150 18M1180 0L1190 25M320 30L290 25 300 0',
];

const markers: Pt[] = [
  [543, 442], [555, 433], [601, 420], [649, 424], [707, 433], [763, 442], [819, 424],
  [855, 397], [866, 372], [876, 356], [903, 327], [940, 311], [958, 303], [977, 286],
];

function SiteMap() {
  const sheet = (lines: string[]) => lines.map((d, i) => <path key={i} d={d} vectorEffect="non-scaling-stroke" />);
  return (
    <svg viewBox="476 250 701 456" className="absolute top-[93px] left-[186px] h-[456px] w-[701px]" fill="none" strokeWidth="1" role="img" aria-label="Contour map">
      <g stroke="#989b9e">
        <g transform="translate(470 240) scale(.33333)">{sheet(west)}</g>
        <g transform="translate(820 240) scale(.33333)">{sheet(east)}</g>
        <g transform="translate(510 480) scale(.43367 .33333)">{sheet(south)}</g>
      </g>
      <path d={`M${markers.map((m) => m.join(' ')).join('L')}`} stroke="#c02bc4" />
      {markers.map(([x, y]) => <path key={x} d={`M${x} ${y - 6}l6 10h-12z`} stroke="#3ecb3e" />)}
      <path d="M476.500 250.500h700v455h-700z" stroke="#fff" />
    </svg>
  );
}

function ViewCube() {
  return (
    <div className="absolute top-[13px] right-0 h-[150px] w-[87px] overflow-hidden font-['Liberation_Sans',sans-serif] font-bold text-[#c3c5c8]">
      <svg viewBox="0 0 88 150" className="h-[150px] w-[88px]" aria-hidden="true">
        <circle cx="60" cy="57" r="46" fill="none" stroke="#555962" strokeWidth="12" />
        <path d="M38 35h44v44H38z" fill="#b9bbbb" />
        <path d="M46 43h28v28H46z" fill="#a9acb2" />
      </svg>
      <span className="absolute top-0 left-[53px] text-[19px] leading-5">N</span>
      <span className="absolute top-[96px] left-[54px] text-[19px] leading-5">S</span>
      <span className="absolute top-[47px] left-[2px] text-[19px] leading-5">W</span>
      <span className="absolute top-[49px] left-[48px] text-[11px] leading-4 text-[#555b66]">TOP</span>
      <button type="button" className="absolute top-[132px] left-[40px] flex h-[15px] w-[40px] items-center justify-between rounded-[3px] border border-[#b4b5c2] bg-[#9a9caa] px-1 text-[9px] font-normal text-[#dcdce4]">
        WCS
        <svg viewBox="0 0 8 5" className="w-[6px]" fill="none" stroke="#c4c5d0" aria-hidden="true"><path d="M1 1h6L4 4z" /></svg>
      </button>
    </div>
  );
}

const layouts = ['8', '9', '10', '11', '12', '13', 'Concept', 'I', 'SITEPLAN', 'notes', 'TD1', 'TD2', 'SuveyFig1', 'SuveyFig2', 'SuveyFig3'];

function DrawingWindow() {
  return (
    <section className="mt-[8px] ml-[5px] flex min-w-0 flex-1 flex-col border-t border-r-2 border-white bg-[#b4cce6] pl-[7px]">
      <header className="-ml-[7px] flex h-[26px] items-center gap-[4px] overflow-hidden bg-gradient-to-b from-[#97b6d8] to-[#b8d0ea] pt-[4px] pl-[7px] text-[#333]">
        <Icon name="dwg" className="size-[14px]" />
        Breaklineexample.dwg
        <div className="-mr-[16px] ml-auto flex gap-[3px]">
          <button type="button" aria-label="Minimize" className="flex h-[14px] w-[26px] items-center justify-center rounded-xs border border-[#6684a4] bg-[#c6daee]">
            <i className="h-[4px] w-[10px] border border-[#555] bg-white" />
          </button>
          <button type="button" aria-label="Restore" className="flex h-[14px] w-[26px] items-center justify-center rounded-xs border border-[#6684a4] bg-[#c6daee]">
            <i className="mr-[3px] size-[7px] border border-[#555] bg-white" />
          </button>
        </div>
      </header>
      <div className="relative flex-1 overflow-hidden bg-[#363940] pt-[3px] pl-[4px]">
        <p className="leading-4 font-semibold text-[#dcdcdc]">[—] [Top] [2D Wireframe]</p>
        <svg viewBox="0 0 14 14" className="size-[14px]" fill="none" stroke="#e0e0e0" strokeWidth="1.500" aria-hidden="true">
          <path d="M1 6V1h4v3H1M9 5V3l2-2 2 2-1 2zM1 13v-3l2-1 2 1v3zM8 10h3v3H8zM11 13l2-3" />
        </svg>
        <SiteMap />
        <ViewCube />
        <p className="absolute top-[333px] left-[361px] h-[121px] w-[382px] border border-[#e02a2a] bg-white pl-px font-['Liberation_Sans',sans-serif] text-[14px] leading-[16px] whitespace-pre text-[#e84a4a]">
          {'After new alignment is roughed in then\n1)go to pulldown   grading > create feature line from objects>\nselect alignment.  Hit enter for default site selection\n2)Select Feature line that you just created,  right click and\nselect "elevation editor"\nYou will then see this.'}
        </p>
      </div>
      <nav className="flex h-[15px] items-center overflow-hidden bg-[#f1f2f2] pl-[231px] font-['Liberation_Sans',sans-serif] text-[#333]">
        {layouts.map((l) => (
          <button key={l} type="button" className="flex items-center whitespace-nowrap">
            <svg viewBox="0 0 7 14" className="h-[14px] w-[7px]" stroke="#555" fill="none" aria-hidden="true"><path d="M1 14L6 0" /></svg>
            <span className="px-[3px]">{l}</span>
          </button>
        ))}
        <svg viewBox="0 0 7 14" className="h-[14px] w-[7px]" stroke="#555" fill="none" aria-hidden="true"><path d="M1 14L6 0" /></svg>
      </nav>
      <div className="-ml-[7px] h-[6px] border-b-2 border-[#49a5c4] bg-[#b9daf2]" />
      <div className="-ml-[7px] h-[3px] border-b border-white bg-[#2a2c30]" />
    </section>
  );
}

const strip = [
  ['cogoA', 'cogoB', 'cogoC', 'cogoD', 'sheet', 'globe', 'globeGrid', 'ptEq', 'ptA', 'ptCur', 'ptZoom', 'alignBlue', 'alignRed'],
  ['ptEq'],
  ['curveRed', 'curveRed2', 'curveRed2'],
  ['dimA', 'dimB', 'dimC', 'dimD', 'paintGlobe', 'brush'],
];

function ToolStrip() {
  return (
    <div className="mr-[4px] ml-[4px] w-[20px] shrink-0 pt-[5px]">
      <div className="h-[8px] border-y-2 border-[#3c3c3c] bg-[#777]" />
      <div className="flex flex-col items-center bg-[#f1f2f2]">
        {strip.map((group, g) => (
          <div key={g} className={`flex w-full flex-col items-center ${g ? 'border-t border-[#bbb] pt-[3px]' : ''}`}>
            {group.map((name, i) => (
              <button key={i} type="button" aria-label={`${name} ${i}`} className="flex h-[19px] items-center"><Icon name={name} className="size-[15px]" /></button>
            ))}
          </div>
        ))}
      </div>
      <div className="mb-px h-[8px] border-y-2 border-[#4a4a4a] bg-[#777]" />
      <div className="flex flex-col items-center bg-[#f1f2f2]">
        {['ptEq', 'ptCur', 'ptSheet'].map((name) => (
          <button key={name} type="button" aria-label={name} className="flex h-[19px] items-center"><Icon name={name} className="size-[15px]" /></button>
        ))}
      </div>
    </div>
  );
}

/* ---------- properties ---------- */

const sections: { title: string; height: string; rows: [string, string][] }[] = [
  {
    title: 'General',
    height: 'h-[115px]',
    rows: [['Color', 'ByLayer'], ['Layer', '0'], ['Linetype', 'ByL'], ['Linetype sc...', '1.0000'], ['Lineweight', 'ByL'], ['Transparen...', 'ByLayer'], ['Thickness', '0.0000']],
  },
  { title: '3D Visualization', height: 'h-[33px]', rows: [['Material', 'ByLayer'], ['Shadow dis...', 'Casts and Re']] },
  { title: 'Plot style', height: 'h-[66px]', rows: [['Plot style', 'ByColor'], ['Plot style t...', 'None'], ['Plot table a...', 'Model'], ['Plot table t...', 'Not availabl']] },
  { title: 'View', height: 'h-[81px]', rows: [['Center X', '7800319.891'], ['Center Y', '705876.4086'], ['Center Z', '0.0000'], ['Height', '1058.1804'], ['Width', '1980.9608']] },
  { title: 'Misc', height: 'h-[98px]', rows: [['Annotation...', '1" = 5\''], ['UCS icon On', 'Yes'], ['UCS icon a...', 'No'], ['UCS per vie...', 'Yes'], ['UCS Name', ''], ['Visual Style', '2D Wirefram']] },
];

function Properties() {
  return (
    <aside className="flex w-[161px] shrink-0 overflow-hidden pt-[6px] text-[#333]">
      <div className="w-[17px] shrink-0 pt-[20px]">
        <SideTab label="Design" active className="h-[104px] w-full rounded-tl" />
        <SideTab label="Display" className="h-[104px] w-full" />
        <SideTab label="Extended Data" className="h-[104px] w-full" />
        <SideTab label="Object Class" className="h-[105px] w-full rounded-bl" />
      </div>
      <div className="mb-[2px] flex min-w-0 flex-1 flex-col bg-[#f3f4f4]">
        <h2 className="flex h-[20px] shrink-0 items-center bg-[#a4a4a4]">
          <i className="mr-[4px] ml-px h-[10px] w-[4px] border-x border-dotted border-[#444]" />
          Properties
        </h2>
        <div className="mt-[8px] mb-[5px] ml-[7px] flex h-[20px] gap-[3px]">
          <div className="relative flex w-[101px] shrink-0 items-center rounded-xs border border-[#777] bg-gradient-to-b from-[#f4f4f4] to-[#dcdcdc]">
            <select aria-label="Selection" className="w-full appearance-none bg-transparent pl-[3px] leading-4">
              <option>No selection</option>
            </select>
            <span className="pointer-events-none absolute right-[3px]"><Caret className="w-[6px]" /></span>
          </div>
          <button type="button" aria-label="Add to selection" className="flex w-[23px] shrink-0 items-center justify-center border border-[#999]"><Icon name="addSel" className="size-[13px]" /></button>
          <button type="button" aria-label="Toggle" className="-ml-[3px] flex w-[23px] shrink-0 items-center border border-[#999] pl-[2px]"><Icon name="toggleSel" /></button>
        </div>
        {sections.map((s) => (
          <section key={s.title} className="mb-[3px] ml-[8px]">
            <h3 className="h-[17px] bg-gradient-to-b from-[#adadad] to-[#9b9b9b] pl-[4px] leading-[17px] font-bold">{s.title}</h3>
            <table className={`ml-[15px] w-[121px] table-fixed border-collapse ${s.height}`}>
              <tbody>
                {s.rows.map(([k, v]) => (
                  <tr key={k}>
                    <th scope="row" className="w-[63px] border border-[#a9a9a9] p-0 pl-[3px] text-left leading-[13px] font-normal whitespace-nowrap">{k}</th>
                    <td className={`border border-r-0 border-[#a9a9a9] p-0 pl-px leading-[13px] whitespace-nowrap ${s.title === 'View' || v === '' ? '' : 'bg-white'}`}>
                      <span className="flex items-center">
                        {k === 'Color' && <i className="mr-[5px] ml-px size-[9px] border border-[#333] bg-white" />}
                        {v === 'ByL' && <i className="mr-[4px] ml-[2px] h-px w-[31px] bg-[#333]" />}
                        {v}
                      </span>
                    </td>
                  </tr>
                ))}
              </tbody>
            </table>
          </section>
        ))}
      </div>
    </aside>
  );
}

/* ---------- panorama ---------- */

const stations: [string, string][] = [
  ['0+00.00', "43.49'"], ['0+43.49', "33.85'"], ['0+77.34', "69.53'"], ['1+46.87', "68.22'"], ['2+15.09', "30.33'"],
  ['2+45.42', "48.82'"], ['2+94.24', "77.41'"], ['3+71.65', "97.93'"], ['4+69.58', "97.93'"], ['5+67.51', "100.40'"],
  ['6+67.90', "82.94'"], ['7+50.84', "82.78'"], ['8+33.62', "24.84'"], ['8+58.46', ''],
];

function PanoButton({ icon, className = '' }: { icon: string; className?: string }) {
  return <button type="button" aria-label={icon} className={className}><Icon name={icon} className="size-[15px]" /></button>;
}

function Panorama() {
  return (
    <section className="absolute top-[428px] left-0 flex text-[#333]">
      <div className="flex h-[394px] w-[522px] rounded border-2 border-[#7b7b7b] bg-[#c6c6c6]">
        <div className="flex w-[18px] shrink-0 flex-col items-center gap-[5px] pt-[2px] pb-[2px]">
          <Icon name="x" className="size-[11px]" />
          <Icon name="autohide" className="size-[11px]" />
          <Icon name="menu" className="size-[11px]" />
          <span className="mt-auto rotate-180 leading-[14px] [writing-mode:vertical-rl]">Panorama</span>
          <Icon name="civil" className="size-[13px]" />
        </div>
        <div className="flex flex-1 flex-col rounded-tl bg-[#f3f4f4]">
          <div className="flex h-[21px] items-end justify-end gap-[9px] pr-[6px]">
            <button type="button" aria-label="Apply" className="flex size-[14px] items-center justify-center border border-[#555] bg-[#e6f2e0]"><Icon name="check" className="size-[12px]" /></button>
            <button type="button" className="size-[14px] border border-[#555] bg-white text-center leading-[12px] font-bold">?</button>
          </div>
          <div className="mt-[4px] flex h-[20px] items-center pl-[5px]">
            <PanoButton icon="panoSel" />
            <PanoButton icon="zoomTo" className="ml-[12px]" />
            <PanoButton icon="quick" className="ml-[6px]" />
            <PanoButton icon="elevBoth" className="ml-[12px]" />
            <PanoButton icon="up" className="ml-[5px]" />
            <PanoButton icon="down" className="ml-[5px]" />
            <PanoButton icon="elevList" className="ml-[6px]" />
            <input aria-label="Increment" defaultValue="1.000'" className="mr-[7px] ml-[7px] h-[17px] w-[57px] border border-[#999] bg-[#f0f0f0] pl-[4px] text-[#888]" />
            <PanoButton icon="flatten" />
            <PanoButton icon="insertPt" className="ml-[6px]" />
            <PanoButton icon="deletePt" className="ml-[5px]" />
            <PanoButton icon="adopt" className="ml-[6px]" />
            <PanoButton icon="refSurf" className="ml-[6px]" />
            <PanoButton icon="tableDown" className="ml-[12px]" />
            <PanoButton icon="tableSel" className="ml-[12px]" />
          </div>
          <div className="mt-[3px] mr-[4px] mb-[3px] ml-px flex-1 border-t-2 border-l border-[#777] bg-white">
            <table className="h-[213px] w-[461px] table-fixed border-collapse text-center">
              <colgroup>
                <col className="w-[24px]" /><col className="w-[73px]" /><col className="w-[87px]" /><col className="w-[72px]" /><col className="w-[106px]" /><col className="w-[99px]" />
              </colgroup>
              <thead className="text-left">
                <tr className="h-[21px]">
                  <th aria-label="Type" />
                  {['Station', 'Elevation', 'Length', 'Grade Ahead', 'Grade Back'].map((h) => (
                    <th key={h} className="border-x border-[#e2e2e2] p-0 pb-[3px] pl-[2px] font-normal">{h}</th>
                  ))}
                </tr>
              </thead>
              <tbody className="[&_td]:border-x [&_td]:border-b [&_td]:border-[#444] [&_td]:p-0 [&_td]:leading-[12px]">
                {stations.map(([station, length]) => (
                  <tr key={station}>
                    <td className="border-l-0!"><Icon name="tri" className="ml-[4px] size-[12px]" /></td>
                    <td>{station}</td>
                    <td>0.000'</td>
                    <td>{length}</td>
                    <td>{length && '0.00%'}</td>
                    <td>{length && '0.00%'}</td>
                  </tr>
                ))}
              </tbody>
            </table>
          </div>
        </div>
      </div>
      <div className="-ml-[4px] flex h-[107px] w-[18px] items-center justify-center rounded-r border border-l-0 border-[#777] bg-[#f3f4f4]">
        <span className="rotate-180 whitespace-nowrap [writing-mode:vertical-rl]">Grading Elevation E...</span>
      </div>
    </section>
  );
}

/* ---------- bottom bars ---------- */

const toggles = ['infer', 'snapGrid', 'grid', 'ortho', 'polar', 'osnap', 'osnap3d', 'otrack', 'ducs', 'dyn', 'lwt', 'transp', 'qp', 'sc'];

function StatusButton({ icon }: { icon: string }) {
  return (
    <button type="button" aria-label={icon} className="flex h-full w-[19px] shrink-0 items-center justify-center border-r border-[#888] bg-gradient-to-b from-[#d0d0d0] to-[#b4b4b4]">
      <Icon name={icon} className="size-[14px]" />
    </button>
  );
}

function StatusBar() {
  return (
    <div className="flex h-[20px] shrink-0 items-center border-y border-[#444] bg-gradient-to-b from-[#999] to-[#808080] font-['Liberation_Sans',sans-serif] text-[#222]">
      <span className="w-[179px] shrink-0 whitespace-nowrap">7799743.3983, 705633.1741, 0.0000</span>
      {toggles.map((t) => <StatusButton key={t} icon={t} />)}
      <div className="ml-auto flex h-full w-[278px] items-center overflow-hidden">
        <button type="button" className="h-full w-[38px] shrink-0 border-x border-[#888] bg-[#b8b8b8]">MODEL</button>
        <StatusButton icon="modelTab" />
        <StatusButton icon="layoutTab" />
        <button type="button" className="ml-[10px] flex h-full w-[58px] shrink-0 items-center gap-[3px] bg-[#b8b8b8] pl-[2px] text-[11px] whitespace-nowrap">
          <Icon name="annot" className="size-[12px]" />1" = 5'<Caret className="w-[6px]" />
        </button>
        <StatusButton icon="annotSun" />
        <StatusButton icon="annotOff" />
        <i className="w-[4px] shrink-0" />
        <StatusButton icon="gear" />
        <StatusButton icon="lockOpen" />
        <StatusButton icon="hw" />
        <span className="flex h-full flex-1 items-center gap-[4px] border border-[#333] bg-[#a0a0a0] pl-[4px]">
          <Icon name="dwg" className="size-[13px]" /><Icon name="bulb" className="size-[14px]" />
        </span>
      </div>
    </div>
  );
}

const ie = (
  <g fill="none">
    <path d="M6 15h17a9 9 0 1 0-3 8" stroke="#5cc3f3" strokeWidth="5" />
    <path d="M3 24C-2 12 14 0 26 3" stroke="#f3cd3a" strokeWidth="2.500" />
  </g>
);

const apps: { name: string; width: string; open?: boolean; art: React.ReactNode }[] = [
  { name: 'Start', width: 'w-[38px]', art: <g><circle cx="10" cy="16" r="14" fill="#3a7fb5" stroke="#a8cfe8" /><path d="M3 9c3-2 5-1 7 0v7c-3-1-5-1-7 0z" fill="#e8632c" /><path d="M11 9c3 1 5 1 8-1v7c-3 2-5 2-8 1z" fill="#8cc63f" /><path d="M2 17c3-2 5-1 7 0v7c-3-1-5-1-7 0z" fill="#3fa2e0" /><path d="M11 17c3 1 5 1 8-1v7c-3 2-5 2-8 1z" fill="#f8c62c" /></g> },
  { name: 'Outlook', width: 'w-[54px]', art: <g><path d="M2 1h24v27H2z" fill="#f4c14f" /><circle cx="10" cy="13" r="6" fill="none" stroke="#fff" strokeWidth="4" /><circle cx="10" cy="13" r="6" fill="none" stroke="#d77a1a" strokeWidth="2" /><circle cx="20" cy="14" r="4" fill="#fff3d8" stroke="#c98a2b" /></g> },
  { name: 'Internet Explorer', width: 'w-[54px]', art: ie },
  { name: 'Explorer', width: 'w-[54px]', art: <g><path d="M1 6l3-3h8l2 3h12v22H1z" fill="#f2dc8e" stroke="#c9ae5a" /><path d="M6 9h17v5H6z" fill="#8fc3e8" /><path d="M3 13h24v15H3z" fill="#faeeb4" /></g> },
  { name: 'Chrome', width: 'w-[52px]', open: true, art: <g><circle cx="14" cy="15" r="13" fill="#e23c2e" /><path d="M14 15L3 9a13 13 0 0 0 8 18z" fill="#3fa648" /><path d="M14 15l-3 13a13 13 0 0 0 15-18H15z" fill="#f8cf32" /><circle cx="14" cy="15" r="6" fill="#fff" /><circle cx="14" cy="15" r="4.500" fill="#3d7fd9" /></g> },
  { name: 'Search', width: 'w-[53px]', art: <g><circle cx="15" cy="14" r="12" fill="#287f88" /><path d="M8 4c6 2 12 0 14 8" stroke="#5eb55a" strokeWidth="4" fill="none" /><circle cx="13" cy="12" r="7" fill="#d5ecf7" stroke="#e5eef2" strokeWidth="2" /><path d="M18 18l8 9" stroke="#ddd" strokeWidth="3" /></g> },
  { name: 'Civil 3D', width: 'w-[52px]', open: true, art: <g><path d="M2 2h24v18H2z" fill="#d9d9dc" /><path d="M17 4c-9-3-12 9-6 13 4 3 9 2 12-1" stroke="#c01f26" strokeWidth="6" fill="none" /><path d="M4 21h20v7H4z" fill="#26282c" /></g> },
  { name: 'Media Player', width: 'w-[54px]', art: <g><path d="M1 6h20v22H1z" fill="#6fb7e4" /><path d="M6 4h20v24H6z" fill="#3f8cc4" /><circle cx="13" cy="17" r="9" fill="#f07d22" /><path d="M10 12l8 5-8 5z" fill="#fff" /></g> },
  { name: 'RAS', width: 'w-[54px]', art: <g><path d="M1 1h26v28H1z" fill="#b9b9b6" stroke="#333" /><path d="M4 12l5 4-2 5 8 2 2-6 5-2M6 26l8-7 6 8" stroke="#3136c4" fill="none" /><path d="M10 10l4 8 6 4" stroke="#b64" fill="none" /><text x="6" y="9" fontSize="8" fill="#222">RAS</text></g> },
  { name: 'Survey', width: 'w-[54px]', art: <g><path d="M3 19l17-9 5 8-17 9z" fill="#eee" stroke="#111" /><path d="M14 6l10 5-4 4z" fill="#b12" /><path d="M12 2l6 7" stroke="#111" strokeWidth="4" /></g> },
  { name: 'Google Earth', width: 'w-[53px]', art: <g><circle cx="14" cy="15" r="13" fill="#3766b5" /><path d="M3 10c9-5 16 0 20 12M7 5c9-2 16 4 19 11" stroke="#dfe9f6" strokeWidth="3" fill="none" /></g> },
  { name: 'iTunes', width: 'w-[53px]', art: <g><circle cx="14" cy="14" r="12.500" fill="#4c9edb" stroke="#d7e9f5" strokeWidth="1.500" /><path d="M11 20V9l8-2v11" stroke="#10233a" strokeWidth="2" fill="none" /><circle cx="9" cy="20" r="2.500" fill="#10233a" /><circle cx="17" cy="18" r="2.500" fill="#10233a" /></g> },
  { name: 'Messenger', width: 'w-[53px]', open: true, art: <g><circle cx="9" cy="8" r="4" fill="#7fc24a" /><circle cx="19" cy="8" r="4" fill="#4fa8de" /><path d="M3 22c0-12 12-12 12 0z" fill="#6db33a" /><path d="M13 22c0-12 12-12 12 0z" fill="#3a90ca" /><path d="M2 20c8 6 18 4 24-2" stroke="#e7c455" strokeWidth="3" fill="none" /><path d="M18 18h8v8h-8z" fill="#42c12e" /></g> },
  { name: 'Acrobat', width: 'w-[53px]', open: true, art: <g><path d="M2 2h24v27H2z" fill="#f4f4f4" /><path d="M5 24c6-3 9-9 8-17 2 9 6 14 11 14-7-2-13-1-19 3z" stroke="#c4161c" fill="none" strokeWidth="1.800" /></g> },
  { name: 'Browser', width: 'w-[53px]', open: true, art: ie },
];

function Taskbar() {
  return (
    <div className="flex h-[24px] shrink-0 overflow-hidden border-t border-[#8ea3c6] bg-gradient-to-r from-[#2c5ba0] via-[#31457d] via-45% to-[#31457d]">
      {apps.map((a) => (
        <button
          key={a.name}
          type="button"
          aria-label={a.name}
          className={`flex h-[40px] shrink-0 justify-center ${a.width} ${a.open ? 'border-x border-[#9db2d3] bg-gradient-to-b from-[#8ba6cf] to-[#4a689f]' : ''}`}
        >
          <svg viewBox="0 0 28 30" className="mt-[2px] h-[30px] w-[28px]" aria-hidden="true">{a.art}</svg>
        </button>
      ))}
      <div className="ml-auto flex w-[190px] items-start bg-gradient-to-r from-transparent via-[#2c62ad] via-15% to-[#27437f] pt-[3px] leading-[13px] text-white">
        <svg viewBox="0 0 80 16" className="mt-[3px] ml-[74px] h-[16px] w-[80px]" fill="none" stroke="#fff" aria-hidden="true">
          <path d="M3 8l4-4 4 4z" fill="#fff" />
          <path d="M22 2v13M23 3h5v2h6l-2 2 2 2h-6V8h-5z" fill="#fff" />
          <path d="M44 5h11v8H44zM47 15h6M43 2h4v4h-4z" strokeWidth="1.500" />
          <path d="M67 6h2l4-4v12l-4-4h-2z" fill="#fff" />
        </svg>
        <div className="ml-[7px] whitespace-nowrap text-center">1:21<br />11/10</div>
      </div>
    </div>
  );
}

export default function App() {
  return (
    <div className="relative flex h-screen flex-col overflow-hidden bg-[#6b6b6b] font-['Open_Sans',sans-serif] text-[10px]">
      <div className="flex h-[22px] shrink-0 items-center border-t-3 border-[#8f9299] bg-gradient-to-b from-[#9b9b9b] to-[#666] pb-[3px] text-white">
        <div className="mr-[12px] flex h-full w-[25px] items-end justify-end border-r border-[#333] bg-gradient-to-b from-[#9c6d6d] to-[#777] text-[7px] font-bold text-[#222]">3D</div>
        {menus.map(([m, w]) => <button key={m} type="button" className={`${w} text-left whitespace-nowrap`}>{m}</button>)}
      </div>
      <nav className="flex h-[15px] shrink-0 items-center bg-[#474747] text-white">
        <button type="button" className="mr-[9px] h-full w-[37px] bg-[#f3f4f4] pl-px text-left text-[#333]">Home</button>
        {tabs.map(([t, w]) => <button key={t} type="button" className={`${w} text-left whitespace-nowrap`}>{t}</button>)}
        <i className="h-[6px] w-[12px] rounded-xs border-2 border-white bg-[#555]" />
        <svg viewBox="0 0 8 5" className="ml-[5px] w-[4px]" fill="#fff" aria-hidden="true"><path d="M0 0h8L4 5z" /></svg>
      </nav>
      <Ribbon />
      <main className="flex min-h-0 flex-1">
        <Toolspace />
        <div className="mr-[4px] flex min-w-0 flex-1 flex-col pl-[5px]">
          <div className="flex min-h-0 flex-1">
            <DrawingWindow />
            <ToolStrip />
          </div>
          <div className="mt-[4px] flex h-[51px] shrink-0 flex-col bg-[#c8c8c8] pl-[14px] font-['DejaVu_Sans_Mono',monospace] text-[#222]">
            <p className="flex-1 pt-[13px] leading-[16px]">Command: GradingElevEditor</p>
            <label className="flex h-[15px] items-center bg-white">
              Command:
              <input className="flex-1" />
            </label>
          </div>
        </div>
        <Properties />
      </main>
      <StatusBar />
      <Taskbar />
      <Panorama />
    </div>
  );
}
